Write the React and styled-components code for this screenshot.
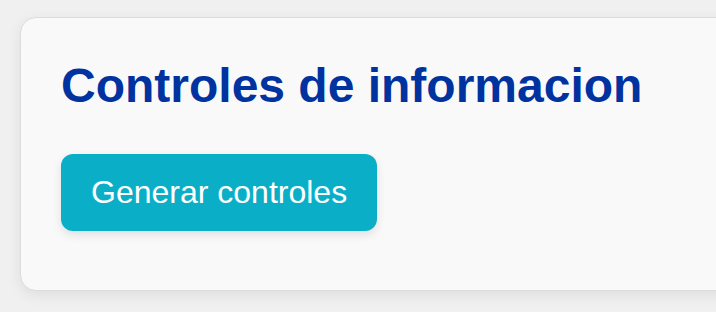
import React from 'react';
import styled, { createGlobalStyle } from 'styled-components';

const GlobalStyle = createGlobalStyle`
  html, body {
    margin: 0;
    padding: 0;
    overflow: hidden;
    background: #f0f0f0;
    font-family: "Liberation Sans", Arial, Helvetica, sans-serif;
  }
`;

const Page = styled.div`
  padding: 17px 0 0 20px;
  height: 312px;
  box-sizing: border-box;
  overflow: hidden;
`;

const Card = styled.section`
  width: 780px;
  box-sizing: border-box;
  background: #f9f9f9;
  border: 1px solid #dcdcdc;
  border-radius: 16px;
  box-shadow: 0 4px 14px rgba(0, 0, 0, 0.08);
  padding: 40px 40px 59px 40px;
`;

const Title = styled.h1`
  margin: 0 0 40px 0;
  font-size: 48px;
  font-weight: 700;
  color: #0033a0;
  line-height: 56px;
`;

const ActionButton = styled.button`
  display: inline-block;
  border: none;
  border-radius: 12px;
  background: #0aafc7;
  color: #ffffff;
  font-family: inherit;
  font-size: 32px;
  line-height: 37px;
  padding: 20px 30px;
  box-shadow: 0 4px 10px rgba(0, 0, 0, 0.1);
  cursor: pointer;
`;

function App() {
  return (
    <>
      <GlobalStyle />
      <Page>
        <Card>
          <Title>Controles de informacion</Title>
          <ActionButton>Generar controles</ActionButton>
        </Card>
      </Page>
    </>
  );
}

export default App;
